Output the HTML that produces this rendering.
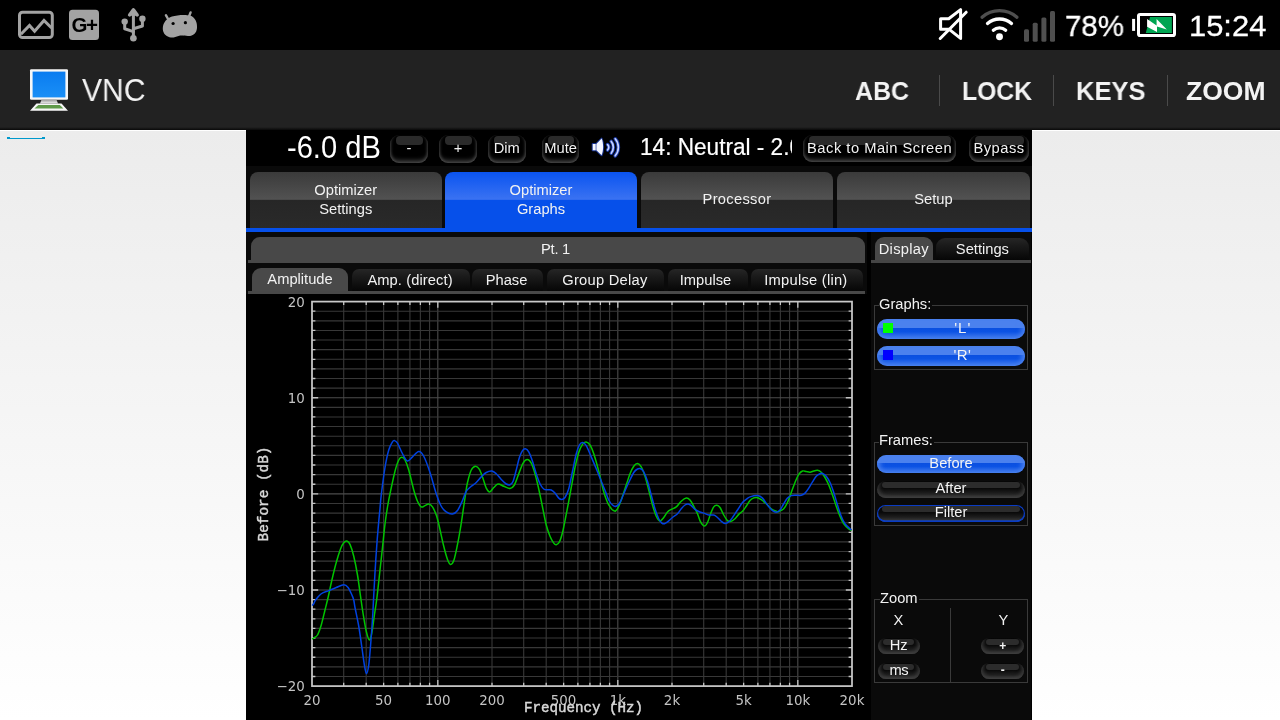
<!DOCTYPE html>
<html lang="en">
<head>
<meta charset="utf-8">
<title>VNC</title>
<style>
html,body{margin:0;padding:0;}
body{width:1280px;height:720px;overflow:hidden;position:relative;background:#fff;font-family:"Liberation Sans",sans-serif;}
.abs{position:absolute;}
.t,.btn,.mtab,.stab,.pill,.glabel,.stxt,.act,.gs{will-change:transform;}
#bg{left:0;top:130px;width:1280px;height:590px;background:linear-gradient(#ececec,#ffffff);border-top:1px solid #fff;box-sizing:border-box;}
#status{left:0;top:0;width:1280px;height:50px;background:#000;}
#abar{left:0;top:50px;width:1280px;height:80px;background:#222;}
#abar .shadow{left:0;top:77px;width:1280px;height:3px;background:linear-gradient(rgba(0,0,0,0),rgba(0,0,0,.75));}
#abar .title{left:81px;top:71px;font-size:32px;line-height:38px;color:#f3f3f3;letter-spacing:0.5px;}
.act{color:#f3f3f3;font-weight:bold;font-size:26.5px;line-height:30px;top:76px;white-space:nowrap;}
.div{top:75px;width:1px;height:31px;background:#4a4a4a;}
.stxt{-webkit-text-stroke:0.3px #fff;color:#fff;font-size:30px;line-height:34px;top:9px;white-space:nowrap;}
#cursor{left:7px;top:138px;width:38px;height:1px;background:#0099cc;}
#cursor:before,#cursor:after{content:"";position:absolute;top:-1px;width:3px;height:2px;background:#0099cc;}
#cursor:before{left:0;}#cursor:after{right:0;}

/* VNC window */
#vnc{left:246px;top:130px;width:785.5px;height:590px;background:#000;overflow:hidden;color:#fff;font-size:14.7px;}
.t{position:absolute;font-size:14.7px;white-space:nowrap;text-align:center;color:#f2f2f2;}
.btn{position:absolute;font-size:14.7px;box-sizing:border-box;border-radius:9px;background:#000;box-shadow:inset 0 -5px 5px -3px #505050, inset 3px -1px 3px -2px #3a3a3a, inset -3px -1px 3px -2px #3a3a3a, inset 0 1px 1px -1px #222;text-align:center;color:#f2f2f2;white-space:nowrap;}
.btn:before{content:"";position:absolute;left:6px;right:5.5px;top:1.3px;height:8.8px;border-radius:4px;background:#2a2a2a;}
.btn span{position:relative;}
.mtab{position:absolute;font-size:14.7px;top:172px;height:56px;border-radius:8px 8px 0 0;background:linear-gradient(#3a3a3a 0%,#525252 49%,#262626 49.6%,#2a2a2a 100%);text-align:center;color:#f2f2f2;line-height:19.5px;}
.mtab.sel{background:linear-gradient(#0a54f0 0%,#3a72f2 49%,#0650ea 49.6%,#0650ea 100%);}
.stab{position:absolute;font-size:14.7px;top:269px;height:22px;border-radius:7px 7px 0 0;background:linear-gradient(#262626 0%,#1a1a1a 35%,#060606 100%);text-align:center;color:#f2f2f2;line-height:22.8px;box-sizing:border-box;}
.stab.sel{top:268px;height:23px;background:#494949;border-radius:9px 9px 0 0;}
.pill{position:absolute;font-size:14.7px;box-sizing:border-box;border-radius:10px;text-align:center;color:#f4f4f4;white-space:nowrap;}
.pill.blue{background:linear-gradient(#4b81ee 0%,#4b81ee 44%,#0a4fe0 45.5%,#0c53e4 64%,#4b81ee 100%);box-shadow:inset 7px 0 5px -4px #4b81ee, inset -7px 0 5px -4px #4b81ee;}
.pill.dark{background:linear-gradient(#060606 0%,#0a0a0a 45%,#1e1e1e 72%,#424242 100%);box-shadow:inset 5px -2px 4px -3px #3c3c3c, inset -5px -2px 4px -3px #3c3c3c;}
.pill.dark:before{content:"";position:absolute;left:5px;right:5.5px;top:0.7px;height:6.3px;border-radius:3.5px;background:#2c2c2c;}
.pill span{position:relative;}
.grp{position:absolute;box-sizing:border-box;border:1px solid #3a3a3a;}
.glabel{position:absolute;font-size:14.7px;background:#0a0a0a;color:#f2f2f2;padding:0 1px 0 0;line-height:15px;}
svg text{font-family:"DejaVu Sans","Liberation Sans",sans-serif;}
</style>
</head>
<body>
<div id="bg" class="abs"></div>
<div id="cursor" class="abs"></div>
<div id="status" class="abs">
<svg class="abs gs" style="left:0;top:0" width="1280" height="50" viewBox="0 0 1280 50">
 <g fill="none" stroke="#a3a3a3" stroke-width="3" stroke-linejoin="round">
  <rect x="19.5" y="12.3" width="32.8" height="25.3" rx="3" ry="3"/>
  <polyline points="20.9,34.2 29.5,25.4 34.6,31.3 44,20.4 51.6,28" stroke-linejoin="miter"/>
 </g>
 <rect x="69" y="9.8" width="30" height="30.2" rx="3.5" fill="#a3a3a3"/>
 <text x="71.6" y="32.3" font-family="Liberation Sans, sans-serif" style="font-family:'Liberation Sans',sans-serif" font-weight="bold" font-size="20.5" letter-spacing="-1.6" fill="#000">G+</text>
 <!-- usb -->
 <g stroke="#a3a3a3" fill="none" stroke-width="3" stroke-linecap="round" stroke-linejoin="round">
  <line x1="133.4" y1="11" x2="133.4" y2="37"/>
  <polyline points="129.6,15 133.4,9.8 137.2,15" stroke-width="3.4"/>
  <polyline points="124.7,22 124.7,28.8 133.4,31.6"/>
  <polyline points="142.4,19 142.4,26 133.4,28.8"/>
 </g>
 <path d="M128.3 15.8 L133.4 8.2 L138.5 15.8 Z" fill="#a3a3a3"/>
 <circle cx="133.4" cy="38.2" r="3.3" fill="#a3a3a3"/>
 <circle cx="124.7" cy="21.6" r="3.2" fill="#a3a3a3"/>
 <circle cx="142.4" cy="18.8" r="3.2" fill="#a3a3a3"/>
 <!-- android bean -->
 <g stroke="#a3a3a3" stroke-width="2.4" stroke-linecap="round">
  <line x1="165.9" y1="15.2" x2="168.6" y2="20"/>
  <line x1="190.6" y1="12.4" x2="188.6" y2="17.5"/>
 </g>
 <path d="M172 16.6 C177 14.8 186 14.4 190 15.6 C195.5 17.4 197.4 23 197 28 C196.6 33.5 193 36.2 188 36 C184 35.8 181.5 35 178.5 36 C175.5 37.2 172.5 38 169.5 37.2 C164.8 36 162.6 32 162.8 28 C163.1 22.5 166.8 18.5 172 16.6 Z" fill="#a3a3a3"/>
 <circle cx="173.1" cy="23.5" r="1.6" fill="#000"/>
 <circle cx="185.4" cy="22.7" r="1.6" fill="#000"/>
 <!-- mute -->
 <path d="M940.6 18.7 L948.7 18.7 L960.6 9.6 L960.6 38.4 L949.2 29.3 L940.6 29.3 Z" fill="none" stroke="#fff" stroke-width="3" stroke-linejoin="round"/>
 <line x1="966.2" y1="12.2" x2="940.2" y2="38.5" stroke="#fff" stroke-width="3" stroke-linecap="round"/>
 <!-- wifi -->
 <g fill="none" stroke-width="3.3" stroke-linecap="round">
  <path d="M982.05 17.23 A26.6 26.6 0 0 1 1016.95 17.23" stroke="#4f4f4f"/>
  <path d="M987.5 23.49 A18.3 18.3 0 0 1 1011.5 23.49" stroke="#fff"/>
  <path d="M993.33 30.2 A9.4 9.4 0 0 1 1005.67 30.2" stroke="#fff"/>
 </g>
 <circle cx="999.5" cy="36.7" r="3.45" fill="#fff"/>
 <!-- signal -->
 <g fill="#4f4f4f">
  <rect x="1024" y="29.2" width="5" height="12.6" rx="1.5"/>
  <rect x="1032.7" y="22.8" width="5" height="19" rx="1.5"/>
  <rect x="1041.4" y="17.4" width="5" height="24.4" rx="1.5"/>
  <rect x="1050" y="11.1" width="5" height="30.7" rx="1.5"/>
 </g>
 <!-- battery -->
 <rect x="1132.1" y="18.9" width="3" height="12" fill="#fff"/>
 <rect x="1138.5" y="14.4" width="36" height="21.2" rx="1.6" fill="none" stroke="#fff" stroke-width="3"/>
 <path d="M1150 17 L1171.9 17 L1171.9 33 L1145.8 33 Z" fill="#00a552"/>
 <path d="M1147.1 18.9 L1156.6 25.4 L1156.6 18.9 L1166.8 29.4 L1157 26.4 L1157 31.9 L1147.1 26.8 Z" fill="#fff"/>
</svg>
<div class="abs stxt" style="left:1064.8px;top:8.6px;font-size:30.3px;transform:scaleX(0.972);transform-origin:0 0;">78%</div>
<div class="abs stxt" style="left:1189.3px;top:8.6px;font-size:30.3px;transform:scaleX(1.02);transform-origin:0 0;">15:24</div>
</div>
<div id="abar" class="abs">
 <div class="abs shadow"></div>
</div>
<svg class="abs" style="left:28px;top:66px" width="44" height="48" viewBox="0 0 44 48">
 <defs>
  <linearGradient id="scr" x1="0" y1="0" x2="0" y2="1"><stop offset="0" stop-color="#0a7cf0"/><stop offset="1" stop-color="#1a8ff6"/></linearGradient>
  <linearGradient id="std" x1="0" y1="0" x2="0" y2="1"><stop offset="0" stop-color="#9a9a9a"/><stop offset="1" stop-color="#f4f4f4"/></linearGradient>
 </defs>
 <rect x="2" y="3.2" width="38" height="30.6" rx="1.2" fill="#f7f7f7"/>
 <rect x="4.6" y="5.6" width="32.8" height="25.8" fill="url(#scr)"/>
 <path d="M13.5 33.8 L28.5 33.8 L30 37.6 L12 37.6 Z" fill="url(#std)"/>
 <path d="M8.5 37.4 L33.5 37.4 L40 44.8 L2 44.8 Z" fill="#f7f7f7"/>
 <path d="M10.4 39 L31.8 39 L35.4 42.4 L6.4 42.4 Z" fill="#5f9a4a"/>
</svg>
<div class="abs gs" style="left:81.5px;top:71px;font-size:32px;line-height:38px;color:#f3f3f3;transform:scaleX(0.94);transform-origin:0 0;">VNC</div>
<div class="abs act" style="left:854.5px;transform:scaleX(0.94);transform-origin:0 0;">ABC</div>
<div class="abs div" style="left:939px;"></div>
<div class="abs act" style="left:962px;transform:scaleX(0.932);transform-origin:0 0;">LOCK</div>
<div class="abs div" style="left:1053px;"></div>
<div class="abs act" style="left:1075.8px;transform:scaleX(0.963);transform-origin:0 0;">KEYS</div>
<div class="abs div" style="left:1167px;"></div>
<div class="abs act" style="left:1186px;transform:scaleX(0.995);transform-origin:0 0;">ZOOM</div>
<div id="vnc" class="abs"></div>
<div class="abs" style="left:871.2px;top:232px;width:160.3px;height:488px;background:#0a0a0a;"></div>
<div class="abs" style="left:246px;top:232px;width:620.5px;height:62px;background:#0a0a0a;"></div>
<div class="abs" style="left:246px;top:166px;width:785.5px;height:66px;background:#0a0a0a;"></div>
<!-- top row -->
<div class="t" style="left:286.8px;top:130.8px;font-size:29.1px;line-height:34px;color:#fff;transform:scaleY(1.1);transform-origin:0 27.5px;">-6.0 dB</div>
<div class="btn" style="left:389.7px;top:134.8px;width:38px;height:28.4px;line-height:27.5px;"><span>-</span></div>
<div class="btn" style="left:439px;top:134.8px;width:38px;height:28.4px;line-height:27.5px;"><span>+</span></div>
<div class="btn" style="left:488px;top:134.8px;width:37.5px;height:28.4px;line-height:26.6px;"><span>Dim</span></div>
<div class="btn" style="left:541.5px;top:134.8px;width:37.3px;height:28.4px;line-height:26.6px;"><span>Mute</span></div>
<svg class="abs" style="left:588px;top:134px" width="36" height="26" viewBox="588 134 36 26">
 <g stroke="#16328f" stroke-width="2" stroke-linejoin="round" fill="#16328f">
  <rect x="592.7" y="144" width="3" height="6.3"/>
  <path d="M596.4 144 L601.6 138.6 C603.6 143 603.6 151 601.6 155.2 L596.4 150.3 Z"/>
 </g>
 <rect x="592.7" y="144" width="3" height="6.3" fill="#f4f6ff"/>
 <path d="M596.4 144 L601.6 138.6 C603.6 143 603.6 151 601.6 155.2 L596.4 150.3 Z" fill="#f4f6ff"/>
 <g fill="none" stroke="#1b3aa8" stroke-width="3.6" stroke-linecap="round">
  <path d="M607.6 144.6 C609.2 146.2 609.2 148.4 607.6 150"/>
  <path d="M611.2 141.4 C614 144.6 614 150 611.2 153.2"/>
  <path d="M615.2 138.8 C619.4 143.6 619.4 151 615.2 155.8"/>
 </g>
 <g fill="none" stroke="#c6d2ff" stroke-width="1.7" stroke-linecap="round">
  <path d="M607.6 144.6 C609.2 146.2 609.2 148.4 607.6 150"/>
  <path d="M611.2 141.4 C614 144.6 614 150 611.2 153.2"/>
  <path d="M615.2 138.8 C619.4 143.6 619.4 151 615.2 155.8"/>
 </g>
</svg>
<div class="t" style="left:640px;top:135.3px;width:152.2px;overflow:hidden;text-align:left;font-size:22.6px;line-height:26px;color:#fff;transform:scaleY(1.05);transform-origin:0 20.6px;-webkit-text-stroke:0.2px #fff;">14: Neutral - 2.0 dB</div>
<div class="btn" style="left:803.3px;top:135px;width:153.2px;height:27px;line-height:26px;letter-spacing:0.5px;"><span>Back to Main Screen</span></div>
<div class="btn" style="left:969.4px;top:135px;width:60px;height:27px;line-height:26px;letter-spacing:0.5px;"><span>Bypass</span></div>
<!-- main tabs -->
<div class="mtab" style="left:249.5px;width:191.5px;"><div style="padding-top:8.5px">Optimizer<br>Settings</div></div>
<div class="mtab sel" style="left:445px;width:192px;"><div style="padding-top:8.5px">Optimizer<br>Graphs</div></div>
<div class="mtab" style="left:641.3px;width:192px;letter-spacing:0.3px;"><div style="padding-top:18.3px">Processor</div></div>
<div class="mtab" style="left:836.8px;width:193px;"><div style="padding-top:18.3px">Setup</div></div>
<div class="abs" style="left:246px;top:228px;width:785.5px;height:4px;background:#0650ea;"></div>
<!-- Pt. 1 bar -->
<div class="abs" style="left:251px;top:237px;width:613.5px;height:24px;border-radius:9px 9px 0 0;background:#484848;"></div>
<div class="abs" style="left:247.5px;top:259.8px;width:617px;height:3px;background:#484848;"></div>
<div class="t" style="left:249px;top:239.5px;width:613px;line-height:18px;letter-spacing:-0.25px;">Pt. 1</div>
<!-- sub tabs -->
<div class="stab sel" style="left:252px;width:96px;">Amplitude</div>
<div class="stab" style="left:351.5px;width:117.5px;letter-spacing:0.1px;padding-right:1.4px;">Amp. (direct)</div>
<div class="stab" style="left:472px;width:70.5px;padding-right:1.4px;">Phase</div>
<div class="stab" style="left:546.8px;width:116.8px;letter-spacing:0.25px;padding-right:1px;">Group Delay</div>
<div class="stab" style="left:667.6px;width:79.7px;padding-right:4.7px;">Impulse</div>
<div class="stab" style="left:750.6px;width:112.2px;letter-spacing:0.25px;padding-right:2.4px;">Impulse (lin)</div>
<div class="abs" style="left:248px;top:291px;width:616.5px;height:2.6px;background:#484848;"></div>
<!-- right panel -->
<div class="abs" style="left:875px;top:237px;width:57.6px;height:24px;border-radius:9px 9px 0 0;background:#484848;"></div>
<div class="stab" style="left:935.5px;top:238.2px;width:92.8px;height:22px;border-radius:9px 9px 0 0;">&nbsp;</div>
<div class="abs" style="left:871.2px;top:260.2px;width:159.6px;height:2.8px;background:#454545;"></div>
<div class="t" style="left:874.5px;top:239.5px;width:57.6px;line-height:18px;letter-spacing:0.3px;">Display</div>
<div class="t" style="left:935.5px;top:239.5px;width:92.8px;line-height:18px;">Settings</div>

<div class="grp" style="left:874px;top:305px;width:153.8px;height:64.5px;"></div>
<div class="glabel" style="left:878.6px;top:296.5px;">Graphs:</div>
<div class="pill blue" style="left:877px;top:319px;width:148px;height:19.7px;line-height:18px;"><span style="font-size:15px;padding-left:23.6px;letter-spacing:1px;">'L'</span></div>
<div class="pill blue" style="left:877px;top:346px;width:148px;height:19.7px;line-height:18px;"><span style="font-size:15px;padding-left:23px;letter-spacing:0.4px;">'R'</span></div>
<div class="abs" style="left:883.3px;top:322.8px;width:10px;height:10px;background:#00ff00;"></div>
<div class="abs" style="left:883.3px;top:349.9px;width:10px;height:10px;background:#0000ff;"></div>

<div class="grp" style="left:874px;top:441.5px;width:153.8px;height:84px;"></div>
<div class="glabel" style="left:878.6px;top:433px;">Frames:</div>
<div class="pill blue" style="left:877px;top:455.3px;width:148px;height:17.7px;line-height:17px;"><span>Before</span></div>
<div class="pill dark" style="left:877px;top:480.8px;width:148px;height:17px;line-height:14.4px;"><span>After</span></div>
<div class="pill dark" style="left:877px;top:505px;width:148px;height:17.2px;line-height:14.6px;box-shadow:inset 0 0 0 1.2px #0a3cc4, inset 0 -1.4px 0 0 #0c4ce8;"><span>Filter</span></div>

<div class="grp" style="left:874px;top:599px;width:153.8px;height:83.5px;"></div>
<div class="glabel" style="left:879.6px;top:590.5px;">Zoom</div>
<div class="abs" style="left:950px;top:608px;width:1px;height:74px;background:#3a3a3a;"></div>
<div class="t" style="left:878px;top:611.5px;width:41px;line-height:17px;">X</div>
<div class="t" style="left:983px;top:611.5px;width:41px;line-height:17px;">Y</div>
<div class="pill dark" style="left:877.5px;top:638px;width:41.5px;height:16px;line-height:14px;border-radius:8px;"><span>Hz</span></div>
<div class="pill dark" style="left:877.5px;top:662.5px;width:41.5px;height:16px;line-height:14px;border-radius:8px;letter-spacing:-0.5px;"><span>ms</span></div>
<div class="pill dark" style="left:980.8px;top:638px;width:43.4px;height:16px;line-height:15px;border-radius:8px;"><span style="font-size:12px;font-weight:bold;">+</span></div>
<div class="pill dark" style="left:980.8px;top:662.5px;width:43.4px;height:16px;line-height:12px;border-radius:8px;"><span style="font-size:12px;font-weight:bold;">-</span></div>
<!-- graph -->
<svg class="abs" style="left:0;top:0" width="1280" height="720" viewBox="0 0 1280 720">
<g stroke-width="1.1" shape-rendering="auto"><line x1="343.70" y1="301.6" x2="343.70" y2="686.1" stroke="#383838"/><line x1="366.19" y1="301.6" x2="366.19" y2="686.1" stroke="#383838"/><line x1="383.63" y1="301.6" x2="383.63" y2="686.1" stroke="#383838"/><line x1="397.88" y1="301.6" x2="397.88" y2="686.1" stroke="#383838"/><line x1="409.93" y1="301.6" x2="409.93" y2="686.1" stroke="#383838"/><line x1="420.37" y1="301.6" x2="420.37" y2="686.1" stroke="#383838"/><line x1="429.58" y1="301.6" x2="429.58" y2="686.1" stroke="#383838"/><line x1="437.81" y1="301.6" x2="437.81" y2="686.1" stroke="#4c4c4c"/><line x1="492.00" y1="301.6" x2="492.00" y2="686.1" stroke="#383838"/><line x1="523.70" y1="301.6" x2="523.70" y2="686.1" stroke="#383838"/><line x1="546.19" y1="301.6" x2="546.19" y2="686.1" stroke="#383838"/><line x1="563.63" y1="301.6" x2="563.63" y2="686.1" stroke="#383838"/><line x1="577.88" y1="301.6" x2="577.88" y2="686.1" stroke="#383838"/><line x1="589.93" y1="301.6" x2="589.93" y2="686.1" stroke="#383838"/><line x1="600.37" y1="301.6" x2="600.37" y2="686.1" stroke="#383838"/><line x1="609.58" y1="301.6" x2="609.58" y2="686.1" stroke="#383838"/><line x1="617.81" y1="301.6" x2="617.81" y2="686.1" stroke="#4c4c4c"/><line x1="672.00" y1="301.6" x2="672.00" y2="686.1" stroke="#383838"/><line x1="703.70" y1="301.6" x2="703.70" y2="686.1" stroke="#383838"/><line x1="726.19" y1="301.6" x2="726.19" y2="686.1" stroke="#383838"/><line x1="743.63" y1="301.6" x2="743.63" y2="686.1" stroke="#383838"/><line x1="757.88" y1="301.6" x2="757.88" y2="686.1" stroke="#383838"/><line x1="769.93" y1="301.6" x2="769.93" y2="686.1" stroke="#383838"/><line x1="780.37" y1="301.6" x2="780.37" y2="686.1" stroke="#383838"/><line x1="789.58" y1="301.6" x2="789.58" y2="686.1" stroke="#383838"/><line x1="797.81" y1="301.6" x2="797.81" y2="686.1" stroke="#4c4c4c"/><line x1="312.0" y1="676.49" x2="852.0" y2="676.49" stroke="#383838"/><line x1="312.0" y1="666.88" x2="852.0" y2="666.88" stroke="#383838"/><line x1="312.0" y1="657.26" x2="852.0" y2="657.26" stroke="#383838"/><line x1="312.0" y1="647.65" x2="852.0" y2="647.65" stroke="#383838"/><line x1="312.0" y1="638.04" x2="852.0" y2="638.04" stroke="#383838"/><line x1="312.0" y1="628.42" x2="852.0" y2="628.42" stroke="#383838"/><line x1="312.0" y1="618.81" x2="852.0" y2="618.81" stroke="#383838"/><line x1="312.0" y1="609.20" x2="852.0" y2="609.20" stroke="#383838"/><line x1="312.0" y1="599.59" x2="852.0" y2="599.59" stroke="#383838"/><line x1="312.0" y1="589.98" x2="852.0" y2="589.98" stroke="#4c4c4c"/><line x1="312.0" y1="580.36" x2="852.0" y2="580.36" stroke="#383838"/><line x1="312.0" y1="570.75" x2="852.0" y2="570.75" stroke="#383838"/><line x1="312.0" y1="561.14" x2="852.0" y2="561.14" stroke="#383838"/><line x1="312.0" y1="551.53" x2="852.0" y2="551.53" stroke="#383838"/><line x1="312.0" y1="541.91" x2="852.0" y2="541.91" stroke="#383838"/><line x1="312.0" y1="532.30" x2="852.0" y2="532.30" stroke="#383838"/><line x1="312.0" y1="522.69" x2="852.0" y2="522.69" stroke="#383838"/><line x1="312.0" y1="513.08" x2="852.0" y2="513.08" stroke="#383838"/><line x1="312.0" y1="503.46" x2="852.0" y2="503.46" stroke="#383838"/><line x1="312.0" y1="493.85" x2="852.0" y2="493.85" stroke="#4c4c4c"/><line x1="312.0" y1="484.24" x2="852.0" y2="484.24" stroke="#383838"/><line x1="312.0" y1="474.62" x2="852.0" y2="474.62" stroke="#383838"/><line x1="312.0" y1="465.01" x2="852.0" y2="465.01" stroke="#383838"/><line x1="312.0" y1="455.40" x2="852.0" y2="455.40" stroke="#383838"/><line x1="312.0" y1="445.79" x2="852.0" y2="445.79" stroke="#383838"/><line x1="312.0" y1="436.18" x2="852.0" y2="436.18" stroke="#383838"/><line x1="312.0" y1="426.56" x2="852.0" y2="426.56" stroke="#383838"/><line x1="312.0" y1="416.95" x2="852.0" y2="416.95" stroke="#383838"/><line x1="312.0" y1="407.34" x2="852.0" y2="407.34" stroke="#383838"/><line x1="312.0" y1="397.73" x2="852.0" y2="397.73" stroke="#4c4c4c"/><line x1="312.0" y1="388.11" x2="852.0" y2="388.11" stroke="#383838"/><line x1="312.0" y1="378.50" x2="852.0" y2="378.50" stroke="#383838"/><line x1="312.0" y1="368.89" x2="852.0" y2="368.89" stroke="#383838"/><line x1="312.0" y1="359.28" x2="852.0" y2="359.28" stroke="#383838"/><line x1="312.0" y1="349.66" x2="852.0" y2="349.66" stroke="#383838"/><line x1="312.0" y1="340.05" x2="852.0" y2="340.05" stroke="#383838"/><line x1="312.0" y1="330.44" x2="852.0" y2="330.44" stroke="#383838"/><line x1="312.0" y1="320.83" x2="852.0" y2="320.83" stroke="#383838"/><line x1="312.0" y1="311.21" x2="852.0" y2="311.21" stroke="#383838"/></g>
<path d="M343.70 301.6v3.4M343.70 686.1v-3.4M366.19 301.6v3.4M366.19 686.1v-3.4M383.63 301.6v3.4M383.63 686.1v-3.4M397.88 301.6v3.4M397.88 686.1v-3.4M409.93 301.6v3.4M409.93 686.1v-3.4M420.37 301.6v3.4M420.37 686.1v-3.4M429.58 301.6v3.4M429.58 686.1v-3.4M437.81 301.6v6.2M437.81 686.1v-6.2M492.00 301.6v3.4M492.00 686.1v-3.4M523.70 301.6v3.4M523.70 686.1v-3.4M546.19 301.6v3.4M546.19 686.1v-3.4M563.63 301.6v3.4M563.63 686.1v-3.4M577.88 301.6v3.4M577.88 686.1v-3.4M589.93 301.6v3.4M589.93 686.1v-3.4M600.37 301.6v3.4M600.37 686.1v-3.4M609.58 301.6v3.4M609.58 686.1v-3.4M617.81 301.6v6.2M617.81 686.1v-6.2M672.00 301.6v3.4M672.00 686.1v-3.4M703.70 301.6v3.4M703.70 686.1v-3.4M726.19 301.6v3.4M726.19 686.1v-3.4M743.63 301.6v3.4M743.63 686.1v-3.4M757.88 301.6v3.4M757.88 686.1v-3.4M769.93 301.6v3.4M769.93 686.1v-3.4M780.37 301.6v3.4M780.37 686.1v-3.4M789.58 301.6v3.4M789.58 686.1v-3.4M797.81 301.6v6.2M797.81 686.1v-6.2M312.0 676.49h3.4M852.0 676.49h-3.4M312.0 666.88h3.4M852.0 666.88h-3.4M312.0 657.26h3.4M852.0 657.26h-3.4M312.0 647.65h3.4M852.0 647.65h-3.4M312.0 638.04h3.4M852.0 638.04h-3.4M312.0 628.42h3.4M852.0 628.42h-3.4M312.0 618.81h3.4M852.0 618.81h-3.4M312.0 609.20h3.4M852.0 609.20h-3.4M312.0 599.59h3.4M852.0 599.59h-3.4M312.0 589.98h6.2M852.0 589.98h-6.2M312.0 580.36h3.4M852.0 580.36h-3.4M312.0 570.75h3.4M852.0 570.75h-3.4M312.0 561.14h3.4M852.0 561.14h-3.4M312.0 551.53h3.4M852.0 551.53h-3.4M312.0 541.91h3.4M852.0 541.91h-3.4M312.0 532.30h3.4M852.0 532.30h-3.4M312.0 522.69h3.4M852.0 522.69h-3.4M312.0 513.08h3.4M852.0 513.08h-3.4M312.0 503.46h3.4M852.0 503.46h-3.4M312.0 493.85h6.2M852.0 493.85h-6.2M312.0 484.24h3.4M852.0 484.24h-3.4M312.0 474.62h3.4M852.0 474.62h-3.4M312.0 465.01h3.4M852.0 465.01h-3.4M312.0 455.40h3.4M852.0 455.40h-3.4M312.0 445.79h3.4M852.0 445.79h-3.4M312.0 436.18h3.4M852.0 436.18h-3.4M312.0 426.56h3.4M852.0 426.56h-3.4M312.0 416.95h3.4M852.0 416.95h-3.4M312.0 407.34h3.4M852.0 407.34h-3.4M312.0 397.73h6.2M852.0 397.73h-6.2M312.0 388.11h3.4M852.0 388.11h-3.4M312.0 378.50h3.4M852.0 378.50h-3.4M312.0 368.89h3.4M852.0 368.89h-3.4M312.0 359.28h3.4M852.0 359.28h-3.4M312.0 349.66h3.4M852.0 349.66h-3.4M312.0 340.05h3.4M852.0 340.05h-3.4M312.0 330.44h3.4M852.0 330.44h-3.4M312.0 320.83h3.4M852.0 320.83h-3.4M312.0 311.21h3.4M852.0 311.21h-3.4" stroke="#c4c4c4" stroke-width="1.3" fill="none"/>
<rect x="312.0" y="301.6" width="540.0" height="384.5" fill="none" stroke="#c8c8c8" stroke-width="1.75"/>
<path d="M312.00 639.00 C312.29 638.83 312.83 638.67 313.75 638.00 C314.67 637.33 316.25 637.17 317.50 635.00 C318.75 632.83 320.00 629.17 321.25 625.00 C322.50 620.83 323.84 614.67 325.00 610.00 C326.16 605.33 327.05 602.00 328.20 597.00 C329.35 592.00 330.56 585.75 331.90 580.00 C333.24 574.25 334.80 567.71 336.25 562.50 C337.70 557.29 339.35 552.04 340.60 548.75 C341.85 545.46 342.70 544.04 343.75 542.75 C344.80 541.46 345.86 540.73 346.90 541.00 C347.94 541.27 348.86 541.86 350.00 544.40 C351.14 546.94 352.50 551.15 353.75 556.25 C355.00 561.35 356.38 568.38 357.50 575.00 C358.62 581.62 359.57 589.54 360.50 596.00 C361.43 602.46 362.14 607.88 363.10 613.75 C364.06 619.62 365.20 626.88 366.25 631.25 C367.30 635.62 368.46 639.79 369.40 640.00 C370.34 640.21 371.07 636.67 371.90 632.50 C372.73 628.33 373.57 620.75 374.40 615.00 C375.23 609.25 375.97 605.50 376.90 598.00 C377.83 590.50 379.07 578.42 380.00 570.00 C380.93 561.58 381.67 555.17 382.50 547.50 C383.33 539.83 384.17 530.75 385.00 524.00 C385.83 517.25 386.67 512.04 387.50 507.00 C388.33 501.96 388.75 499.71 390.00 493.75 C391.25 487.79 393.54 476.88 395.00 471.25 C396.46 465.62 397.60 462.33 398.75 460.00 C399.90 457.67 400.86 457.25 401.90 457.25 C402.94 457.25 403.86 457.88 405.00 460.00 C406.14 462.12 407.29 465.00 408.75 470.00 C410.21 475.00 412.29 484.79 413.75 490.00 C415.21 495.21 416.25 498.43 417.50 501.25 C418.75 504.07 420.00 506.17 421.25 506.90 C422.50 507.62 423.75 506.08 425.00 505.60 C426.25 505.12 427.50 503.78 428.75 504.00 C430.00 504.22 431.25 505.07 432.50 506.90 C433.75 508.73 435.25 512.32 436.25 515.00 C437.25 517.68 437.25 517.79 438.50 523.00 C439.75 528.21 442.25 540.18 443.75 546.25 C445.25 552.32 446.36 556.38 447.50 559.40 C448.64 562.42 449.56 564.20 450.60 564.40 C451.64 564.60 452.68 563.50 453.75 560.60 C454.82 557.70 455.88 552.43 457.00 547.00 C458.12 541.57 459.42 534.50 460.50 528.00 C461.58 521.50 462.67 513.58 463.50 508.00 C464.33 502.42 464.83 498.75 465.50 494.50 C466.17 490.25 466.54 486.58 467.50 482.50 C468.46 478.42 469.90 472.71 471.25 470.00 C472.60 467.29 474.24 466.35 475.60 466.25 C476.96 466.15 478.15 467.32 479.40 469.40 C480.65 471.48 481.96 475.63 483.10 478.75 C484.24 481.87 485.14 485.91 486.25 488.10 C487.36 490.29 488.50 492.00 489.75 491.90 C491.00 491.80 492.36 488.82 493.75 487.50 C495.14 486.18 496.43 484.21 498.10 484.00 C499.77 483.79 501.77 485.50 503.75 486.25 C505.73 487.00 508.23 488.71 510.00 488.50 C511.77 488.29 512.94 487.46 514.40 485.00 C515.86 482.54 517.30 477.40 518.75 473.75 C520.20 470.10 521.68 465.46 523.10 463.10 C524.52 460.74 525.89 459.60 527.25 459.60 C528.61 459.60 529.96 460.74 531.25 463.10 C532.54 465.46 533.75 469.43 535.00 473.75 C536.25 478.07 537.50 483.46 538.75 489.00 C540.00 494.54 541.25 501.00 542.50 507.00 C543.75 513.00 545.00 520.12 546.25 525.00 C547.50 529.88 548.75 533.23 550.00 536.25 C551.25 539.27 552.71 541.68 553.75 543.10 C554.79 544.52 555.31 544.95 556.25 544.75 C557.19 544.55 558.36 543.94 559.40 541.90 C560.44 539.86 561.47 536.57 562.50 532.50 C563.53 528.43 564.56 522.71 565.60 517.50 C566.64 512.29 567.81 506.25 568.75 501.25 C569.69 496.25 570.21 493.12 571.25 487.50 C572.29 481.88 573.75 473.33 575.00 467.50 C576.25 461.67 577.50 456.35 578.75 452.50 C580.00 448.65 581.29 446.13 582.50 444.40 C583.71 442.67 584.75 442.00 586.00 442.10 C587.25 442.20 588.71 443.06 590.00 445.00 C591.29 446.94 592.29 449.38 593.75 453.75 C595.21 458.12 597.12 465.04 598.75 471.25 C600.38 477.46 602.04 485.79 603.50 491.00 C604.96 496.21 606.33 499.75 607.50 502.50 C608.67 505.25 609.67 506.25 610.50 507.50 C611.33 508.75 611.65 509.42 612.50 510.00 C613.35 510.58 614.56 511.62 615.60 511.00 C616.64 510.38 617.60 508.71 618.75 506.25 C619.90 503.79 621.25 499.79 622.50 496.25 C623.75 492.71 625.00 488.75 626.25 485.00 C627.50 481.25 628.75 476.88 630.00 473.75 C631.25 470.62 632.50 467.96 633.75 466.25 C635.00 464.54 636.25 463.39 637.50 463.50 C638.75 463.61 640.00 464.77 641.25 466.90 C642.50 469.02 643.75 472.40 645.00 476.25 C646.25 480.10 647.50 485.21 648.75 490.00 C650.00 494.79 651.25 500.62 652.50 505.00 C653.75 509.38 655.00 513.58 656.25 516.25 C657.50 518.92 658.75 520.79 660.00 521.00 C661.25 521.21 662.50 519.02 663.75 517.50 C665.00 515.98 666.25 513.25 667.50 511.90 C668.75 510.55 669.79 510.23 671.25 509.40 C672.71 508.57 674.58 508.26 676.25 506.90 C677.92 505.54 679.58 502.72 681.25 501.25 C682.92 499.78 684.79 498.31 686.25 498.10 C687.71 497.89 688.75 498.64 690.00 500.00 C691.25 501.36 692.50 503.96 693.75 506.25 C695.00 508.54 696.36 511.14 697.50 513.75 C698.64 516.36 699.45 519.86 700.60 521.90 C701.75 523.94 703.25 525.90 704.40 526.00 C705.55 526.10 706.47 524.54 707.50 522.50 C708.53 520.46 709.56 516.35 710.60 513.75 C711.64 511.15 712.70 508.32 713.75 506.90 C714.80 505.48 715.86 505.15 716.90 505.25 C717.94 505.35 718.86 505.88 720.00 507.50 C721.14 509.12 722.50 512.82 723.75 515.00 C725.00 517.18 726.36 519.52 727.50 520.60 C728.64 521.68 729.35 521.81 730.60 521.50 C731.85 521.19 733.64 519.93 735.00 518.75 C736.36 517.57 737.50 515.65 738.75 514.40 C740.00 513.15 741.25 512.61 742.50 511.25 C743.75 509.89 745.00 508.02 746.25 506.25 C747.50 504.48 748.75 501.99 750.00 500.60 C751.25 499.21 752.60 498.42 753.75 497.90 C754.90 497.38 755.65 497.20 756.90 497.50 C758.15 497.80 759.69 498.66 761.25 499.70 C762.81 500.74 764.58 502.24 766.25 503.75 C767.92 505.26 769.58 507.50 771.25 508.75 C772.92 510.00 775.00 510.79 776.25 511.25 C777.50 511.71 777.50 511.92 778.75 511.50 C780.00 511.08 782.29 510.25 783.75 508.75 C785.21 507.25 786.25 505.21 787.50 502.50 C788.75 499.79 790.00 495.83 791.25 492.50 C792.50 489.17 793.75 485.52 795.00 482.50 C796.25 479.48 797.50 476.32 798.75 474.40 C800.00 472.48 801.25 471.48 802.50 471.00 C803.75 470.52 805.00 471.29 806.25 471.50 C807.50 471.71 808.75 472.33 810.00 472.25 C811.25 472.17 812.50 471.33 813.75 471.00 C815.00 470.67 816.25 470.04 817.50 470.25 C818.75 470.46 820.00 471.04 821.25 472.25 C822.50 473.46 823.75 475.38 825.00 477.50 C826.25 479.62 827.50 482.08 828.75 485.00 C830.00 487.92 831.25 491.46 832.50 495.00 C833.75 498.54 835.00 502.71 836.25 506.25 C837.50 509.79 838.75 513.33 840.00 516.25 C841.25 519.17 842.29 521.62 843.75 523.75 C845.21 525.88 847.46 527.88 848.75 529.00 C850.04 530.12 851.04 530.25 851.50 530.50" fill="none" stroke="#00c400" stroke-width="1.5" stroke-linejoin="round"/>
<path d="M312.00 605.50 C312.29 605.21 313.15 604.67 313.75 603.75 C314.35 602.83 314.35 601.67 315.60 600.00 C316.85 598.33 319.06 595.32 321.25 593.75 C323.44 592.18 326.25 591.64 328.75 590.60 C331.25 589.56 333.75 588.48 336.25 587.50 C338.75 586.52 341.77 584.75 343.75 584.75 C345.73 584.75 346.74 585.79 348.10 587.50 C349.46 589.21 350.96 592.92 351.90 595.00 C352.84 597.08 353.23 597.92 353.75 600.00 C354.27 602.08 354.17 603.12 355.00 607.50 C355.83 611.88 357.60 619.58 358.75 626.25 C359.90 632.92 360.96 641.04 361.90 647.50 C362.84 653.96 363.63 660.62 364.40 665.00 C365.17 669.38 365.77 673.75 366.50 673.75 C367.23 673.75 368.07 669.79 368.75 665.00 C369.43 660.21 369.98 652.67 370.60 645.00 C371.23 637.33 372.00 626.83 372.50 619.00 C373.00 611.17 373.18 605.75 373.60 598.00 C374.02 590.25 374.45 581.54 375.00 572.50 C375.55 563.46 376.27 552.25 376.90 543.75 C377.52 535.25 378.23 527.38 378.75 521.50 C379.27 515.62 379.58 512.92 380.00 508.50 C380.42 504.08 380.42 501.83 381.25 495.00 C382.08 488.17 383.75 475.00 385.00 467.50 C386.25 460.00 387.50 454.27 388.75 450.00 C390.00 445.73 391.56 443.47 392.50 441.90 C393.44 440.33 393.57 440.40 394.40 440.60 C395.23 440.80 396.15 440.91 397.50 443.10 C398.85 445.29 400.83 450.77 402.50 453.75 C404.17 456.73 405.83 460.48 407.50 461.00 C409.17 461.52 410.62 458.48 412.50 456.90 C414.38 455.32 416.88 451.61 418.75 451.50 C420.62 451.39 421.88 452.75 423.75 456.25 C425.62 459.75 427.92 466.25 430.00 472.50 C432.08 478.75 434.38 488.12 436.25 493.75 C438.12 499.38 439.58 503.23 441.25 506.25 C442.92 509.27 444.38 510.61 446.25 511.90 C448.12 513.19 450.62 514.23 452.50 514.00 C454.38 513.77 455.83 512.75 457.50 510.50 C459.17 508.25 461.04 503.71 462.50 500.50 C463.96 497.29 464.79 493.62 466.25 491.25 C467.71 488.88 469.58 487.71 471.25 486.25 C472.92 484.79 474.58 484.06 476.25 482.50 C477.92 480.94 479.58 478.57 481.25 476.90 C482.92 475.23 484.48 473.48 486.25 472.50 C488.02 471.52 490.23 470.79 491.90 471.00 C493.57 471.21 494.69 472.35 496.25 473.75 C497.81 475.15 499.58 477.69 501.25 479.40 C502.92 481.11 504.79 483.11 506.25 484.00 C507.71 484.89 508.86 485.21 510.00 484.75 C511.14 484.29 512.06 483.71 513.10 481.25 C514.14 478.79 515.20 473.96 516.25 470.00 C517.30 466.04 518.36 460.73 519.40 457.50 C520.44 454.27 521.52 452.06 522.50 450.60 C523.48 449.14 524.21 448.53 525.25 448.75 C526.29 448.97 527.54 449.82 528.75 451.90 C529.96 453.98 531.25 457.61 532.50 461.25 C533.75 464.89 535.00 470.00 536.25 473.75 C537.50 477.50 538.75 481.21 540.00 483.75 C541.25 486.29 542.50 488.00 543.75 489.00 C545.00 490.00 546.25 489.58 547.50 489.75 C548.75 489.92 550.00 489.44 551.25 490.00 C552.50 490.56 553.75 491.75 555.00 493.10 C556.25 494.45 557.60 497.05 558.75 498.10 C559.90 499.15 560.86 499.50 561.90 499.40 C562.94 499.30 563.86 499.27 565.00 497.50 C566.14 495.73 567.50 493.12 568.75 488.75 C570.00 484.38 571.25 477.08 572.50 471.25 C573.75 465.42 575.10 458.12 576.25 453.75 C577.40 449.38 578.36 446.88 579.40 445.00 C580.44 443.12 581.36 442.40 582.50 442.50 C583.64 442.60 584.79 443.20 586.25 445.60 C587.71 448.00 589.58 453.04 591.25 456.90 C592.92 460.76 594.58 464.69 596.25 468.75 C597.92 472.81 599.71 477.46 601.25 481.25 C602.79 485.04 604.25 488.38 605.50 491.50 C606.75 494.62 607.58 497.75 608.75 500.00 C609.92 502.25 611.25 503.96 612.50 505.00 C613.75 506.04 615.00 506.67 616.25 506.25 C617.50 505.83 618.75 504.58 620.00 502.50 C621.25 500.42 622.29 497.08 623.75 493.75 C625.21 490.42 627.08 486.04 628.75 482.50 C630.42 478.96 632.29 474.75 633.75 472.50 C635.21 470.25 636.36 469.62 637.50 469.00 C638.64 468.38 639.56 468.27 640.60 468.75 C641.64 469.23 642.60 469.82 643.75 471.90 C644.90 473.98 646.25 477.40 647.50 481.25 C648.75 485.10 650.00 490.42 651.25 495.00 C652.50 499.58 653.75 504.79 655.00 508.75 C656.25 512.71 657.60 516.36 658.75 518.75 C659.90 521.14 660.96 522.27 661.90 523.10 C662.84 523.93 663.47 523.95 664.40 523.75 C665.33 523.55 666.15 522.94 667.50 521.90 C668.85 520.86 670.83 518.86 672.50 517.50 C674.17 516.14 676.04 515.21 677.50 513.75 C678.96 512.29 680.00 510.21 681.25 508.75 C682.50 507.29 683.86 505.79 685.00 505.00 C686.14 504.21 687.06 503.90 688.10 504.00 C689.14 504.10 690.10 504.70 691.25 505.60 C692.40 506.50 693.75 508.42 695.00 509.40 C696.25 510.38 697.29 510.88 698.75 511.50 C700.21 512.12 702.08 512.52 703.75 513.10 C705.42 513.68 707.08 514.68 708.75 515.00 C710.42 515.32 712.29 514.58 713.75 515.00 C715.21 515.42 716.25 516.46 717.50 517.50 C718.75 518.54 720.00 520.25 721.25 521.25 C722.50 522.25 723.75 523.39 725.00 523.50 C726.25 523.61 727.50 522.90 728.75 521.90 C730.00 520.90 731.04 519.48 732.50 517.50 C733.96 515.52 735.83 512.50 737.50 510.00 C739.17 507.50 741.00 504.30 742.50 502.50 C744.00 500.70 745.25 500.13 746.50 499.20 C747.75 498.27 748.17 497.50 750.00 496.90 C751.83 496.30 755.42 495.40 757.50 495.60 C759.58 495.80 760.83 496.53 762.50 498.10 C764.17 499.67 765.83 502.92 767.50 505.00 C769.17 507.08 771.04 509.39 772.50 510.60 C773.96 511.81 775.00 512.35 776.25 512.25 C777.50 512.15 778.75 511.42 780.00 510.00 C781.25 508.58 782.50 505.73 783.75 503.75 C785.00 501.77 786.25 499.46 787.50 498.10 C788.75 496.74 789.79 496.08 791.25 495.60 C792.71 495.12 794.58 495.31 796.25 495.25 C797.92 495.19 799.79 495.61 801.25 495.25 C802.71 494.89 803.75 494.29 805.00 493.10 C806.25 491.91 807.50 489.97 808.75 488.10 C810.00 486.23 811.25 483.88 812.50 481.90 C813.75 479.92 815.00 477.61 816.25 476.25 C817.50 474.89 818.96 474.21 820.00 473.75 C821.04 473.29 821.46 473.08 822.50 473.50 C823.54 473.92 825.00 474.75 826.25 476.25 C827.50 477.75 828.75 479.79 830.00 482.50 C831.25 485.21 832.50 488.75 833.75 492.50 C835.00 496.25 836.25 501.04 837.50 505.00 C838.75 508.96 840.00 513.12 841.25 516.25 C842.50 519.38 843.54 521.67 845.00 523.75 C846.46 525.83 848.92 527.74 850.00 528.75 C851.08 529.76 851.25 529.62 851.50 529.80" fill="none" stroke="#0042e0" stroke-width="1.5" stroke-linejoin="round"/>
<g fill="#c4c4c4" font-size="13.4" style="font-family:'DejaVu Sans','Liberation Sans',sans-serif"><text x="304.8" y="306.8" text-anchor="end">20</text><text x="304.8" y="402.9" text-anchor="end">10</text><text x="304.8" y="499.1" text-anchor="end">0</text><text x="304.8" y="595.2" text-anchor="end">−10</text><text x="304.8" y="691.3" text-anchor="end">−20</text><text x="312.0" y="705.4" text-anchor="middle">20</text><text x="383.6" y="705.4" text-anchor="middle">50</text><text x="437.8" y="705.4" text-anchor="middle">100</text><text x="492.0" y="705.4" text-anchor="middle">200</text><text x="563.6" y="705.4" text-anchor="middle">500</text><text x="617.8" y="705.4" text-anchor="middle">1k</text><text x="672.0" y="705.4" text-anchor="middle">2k</text><text x="743.6" y="705.4" text-anchor="middle">5k</text><text x="797.8" y="705.4" text-anchor="middle">10k</text><text x="852.0" y="705.4" text-anchor="middle">20k</text></g>
<text x="583.5" y="711.6" text-anchor="middle" fill="#d8d8d8" font-size="14.2" stroke="#d8d8d8" stroke-width="0.45" style="font-family:'Liberation Mono',monospace">Frequency (Hz)</text>
<text transform="translate(268.2 494) rotate(-90)" text-anchor="middle" fill="#d8d8d8" font-size="14.4" stroke="#d8d8d8" stroke-width="0.45" style="font-family:'Liberation Mono',monospace">Before (dB)</text>
</svg>
</body></html>
